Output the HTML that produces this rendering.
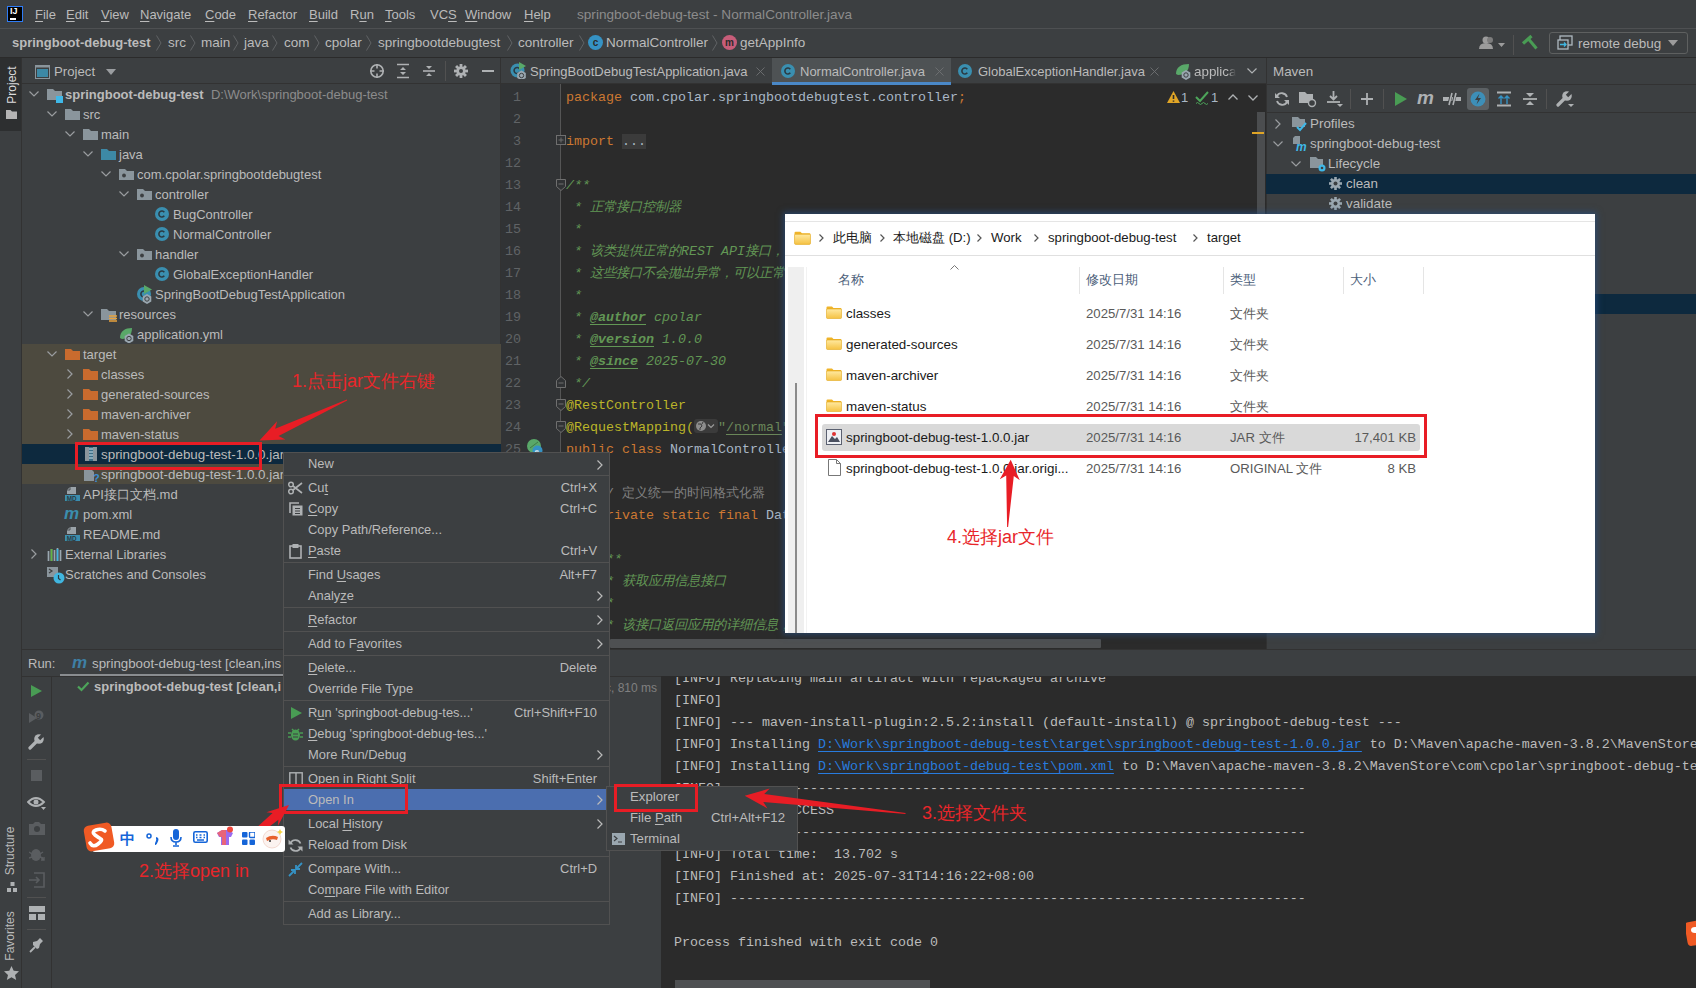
<!DOCTYPE html>
<html><head><meta charset="utf-8">
<style>
*{margin:0;padding:0;box-sizing:border-box}
html,body{width:1696px;height:988px;overflow:hidden;background:#3c3f41;font-family:"Liberation Sans",sans-serif;font-size:13px;color:#bbbbbb}
.a{position:absolute}
.t{position:absolute;white-space:nowrap;line-height:16px}
.m{font-family:"Liberation Mono",monospace}
.u{text-decoration:underline;text-underline-offset:2px;text-decoration-thickness:1px}
.chev{position:absolute;width:7px;height:7px;border-right:1.3px solid #9a9da0;border-bottom:1.3px solid #9a9da0}
.cd{transform:rotate(45deg)}
.cr{transform:rotate(-45deg)}
.fold{position:absolute;width:14px;height:11px}
.cic{position:absolute;width:15px;height:15px;border-radius:50%;background:#3592c4;color:#2b2b2b;font-size:10px;line-height:15px;text-align:center;font-weight:bold}
.mtx{position:absolute;white-space:nowrap;line-height:16px;color:#bbbbbb}
.sc{position:absolute;white-space:nowrap;line-height:16px;color:#bbbbbb;text-align:right}
.sep{position:absolute;height:1px;background:#515151}
.code{position:absolute;white-space:pre;font-family:"Liberation Mono",monospace;font-size:13.33px;line-height:22px;color:#a9b7c6}
.ln{position:absolute;white-space:pre;font-family:"Liberation Mono",monospace;font-size:13.33px;line-height:22px;color:#606366;text-align:right;width:30px}
.k{color:#cc7832}.cm{color:#629755;font-style:italic}.an{color:#bbb529}.lc{color:#808080}
</style></head><body>

<!-- ================= title bar ================= -->
<div class="a" style="left:0;top:0;width:1696px;height:29px;background:#3c3f41;border-bottom:1px solid #4e5052"></div>
<div class="a" style="left:7px;top:6px;width:16px;height:16px;background:#000;border:1.5px solid #2f7cf6"></div>
<div class="t" style="left:10px;top:7px;font-size:9px;font-weight:bold;color:#fff;line-height:9px">IJ</div>
<div class="a" style="left:10px;top:18px;width:6px;height:1.5px;background:#fff"></div>
<div class="t" style="left:35px;top:7px"><span class="u">F</span>ile</div>
<div class="t" style="left:66px;top:7px"><span class="u">E</span>dit</div>
<div class="t" style="left:101px;top:7px"><span class="u">V</span>iew</div>
<div class="t" style="left:140px;top:7px"><span class="u">N</span>avigate</div>
<div class="t" style="left:205px;top:7px"><span class="u">C</span>ode</div>
<div class="t" style="left:248px;top:7px"><span class="u">R</span>efactor</div>
<div class="t" style="left:309px;top:7px"><span class="u">B</span>uild</div>
<div class="t" style="left:350px;top:7px">R<span class="u">u</span>n</div>
<div class="t" style="left:385px;top:7px"><span class="u">T</span>ools</div>
<div class="t" style="left:430px;top:7px">VC<span class="u">S</span></div>
<div class="t" style="left:465px;top:7px"><span class="u">W</span>indow</div>
<div class="t" style="left:524px;top:7px"><span class="u">H</span>elp</div>
<div class="t" style="left:577px;top:7px;color:#8c8c8c;font-size:13.6px">springboot-debug-test - NormalController.java</div>

<!-- ================= nav bar ================= -->
<div class="a" style="left:0;top:29px;width:1696px;height:29px;background:#3c3f41;border-bottom:1px solid #323232"></div>
<div class="t" style="left:12px;top:35px;font-weight:bold;color:#bbbbbb">springboot-debug-test</div>
<svg class="a" style="left:156px;top:35px" width="6" height="16"><path d="M0.5 0.5L5 8 0.5 15.5" stroke="#606365" stroke-width="1" fill="none"/></svg><svg class="a" style="left:190px;top:35px" width="6" height="16"><path d="M0.5 0.5L5 8 0.5 15.5" stroke="#606365" stroke-width="1" fill="none"/></svg><svg class="a" style="left:233px;top:35px" width="6" height="16"><path d="M0.5 0.5L5 8 0.5 15.5" stroke="#606365" stroke-width="1" fill="none"/></svg><svg class="a" style="left:272px;top:35px" width="6" height="16"><path d="M0.5 0.5L5 8 0.5 15.5" stroke="#606365" stroke-width="1" fill="none"/></svg><svg class="a" style="left:314px;top:35px" width="6" height="16"><path d="M0.5 0.5L5 8 0.5 15.5" stroke="#606365" stroke-width="1" fill="none"/></svg><svg class="a" style="left:366px;top:35px" width="6" height="16"><path d="M0.5 0.5L5 8 0.5 15.5" stroke="#606365" stroke-width="1" fill="none"/></svg><svg class="a" style="left:507px;top:35px" width="6" height="16"><path d="M0.5 0.5L5 8 0.5 15.5" stroke="#606365" stroke-width="1" fill="none"/></svg><svg class="a" style="left:579px;top:35px" width="6" height="16"><path d="M0.5 0.5L5 8 0.5 15.5" stroke="#606365" stroke-width="1" fill="none"/></svg><svg class="a" style="left:712px;top:35px" width="6" height="16"><path d="M0.5 0.5L5 8 0.5 15.5" stroke="#606365" stroke-width="1" fill="none"/></svg>
<div class="t" style="left:168px;top:35px;font-size:13.5px">src</div>
<div class="t" style="left:201px;top:35px;font-size:13.5px">main</div>
<div class="t" style="left:244px;top:35px;font-size:13.5px">java</div>
<div class="t" style="left:284px;top:35px;font-size:13.5px">com</div>
<div class="t" style="left:325px;top:35px;font-size:13.5px">cpolar</div>
<div class="t" style="left:378px;top:35px;font-size:13.5px">springbootdebugtest</div>
<div class="t" style="left:518px;top:35px;font-size:13.5px">controller</div>
<div class="cic" style="left:588px;top:35px">c</div>
<div class="t" style="left:606px;top:35px;font-size:13.5px">NormalController</div>
<div class="cic" style="left:722px;top:35px;background:#c75d79">m</div>
<div class="t" style="left:740px;top:35px;font-size:13.5px">getAppInfo</div>
<!-- right side nav -->
<svg class="a" style="left:1478px;top:35px" width="30" height="16"><circle cx="8" cy="5" r="3.5" fill="#9c9c9c"/><path d="M1 14 q0-6 7-6 q7 0 7 6z" fill="#9c9c9c"/><circle cx="12" cy="5" r="3" fill="#7d7d7d"/><path d="M20 8 h7 l-3.5 4z" fill="#9c9c9c"/></svg>
<div class="a" style="left:1513px;top:35px;width:1px;height:20px;background:#515151"></div>
<svg class="a" style="left:1520px;top:34px" width="20" height="18"><path d="M3 9.5L11.5 2" stroke="#499c54" stroke-width="3.2"/><path d="M8.5 5L16.5 14.5" stroke="#499c54" stroke-width="3"/></svg>
<div class="a" style="left:1549px;top:32px;width:139px;height:22px;border:1px solid #5e6060;border-radius:3px"></div>
<svg class="a" style="left:1557px;top:35px" width="16" height="16"><rect x="3" y="1" width="12" height="9" fill="none" stroke="#aeb9c0" stroke-width="1.3"/><rect x="1" y="5" width="10" height="9" fill="#3c3f41" stroke="#aeb9c0" stroke-width="1.3"/><path d="M3 9.5h6M7 7.5l2 2-2 2" stroke="#40b6e0" stroke-width="1.3" fill="none"/></svg>
<div class="t" style="left:1578px;top:36px;font-size:13.5px">remote debug</div>
<div class="a" style="left:1668px;top:40px;width:0;height:0;border-left:5px solid transparent;border-right:5px solid transparent;border-top:6px solid #9c9c9c"></div>

<!-- ================= left stripe ================= -->
<div class="a" style="left:0;top:57px;width:22px;height:931px;background:#3c3f41;border-right:1px solid #323232"></div>
<div class="a" style="left:0;top:57px;width:21px;height:74px;background:#2d2f30"></div>
<div class="t" style="left:-8px;top:77px;transform:rotate(-90deg);color:#dcdcdc;font-size:12px;width:40px;text-align:center">Project</div><svg class="a" style="left:6px;top:110px" width="11" height="9"><path d="M0 0h4.5l1.5 1.5h5v7.5h-11z" fill="#b4b4b4"/></svg>

<!-- ================= project panel ================= -->
<div class="a" style="left:22px;top:57px;width:479px;height:593px;background:#3c3f41;border-right:1px solid #323232"></div>
<div class="a" style="left:22px;top:83px;width:479px;height:1px;background:#323232"></div>

<!-- ================= editor ================= -->
<div class="a" style="left:501px;top:57px;width:765px;height:27px;background:#3c3f41;border-bottom:1px solid #323232"></div>
<div class="a" style="left:501px;top:84px;width:765px;height:566px;background:#2b2b2b"></div>

<!-- ================= maven ================= -->
<div class="a" style="left:1266px;top:57px;width:430px;height:593px;background:#3c3f41;border-left:1px solid #323232"></div>

<!-- ================= bottom ================= -->
<div class="a" style="left:22px;top:649px;width:1674px;height:339px;background:#3c3f41;border-top:1px solid #323232"></div>
<div class="a" style="left:661px;top:676px;width:1035px;height:312px;background:#2b2b2b"></div>
<div class="a" style="left:22px;top:344px;width:479px;height:140px;background:#4d4a3f"></div>
<div class="a" style="left:22px;top:444px;width:479px;height:20px;background:#0d293e"></div>
<div class="a" style="left:22px;top:84px;width:479px;height:560px;overflow:hidden">
<svg class="a" style="left:7px;top:7px" width="10" height="6"><path d="M0.5 0.5 L5 5 L9.5 0.5" stroke="#9a9da0" stroke-width="1.2" fill="none"/></svg>
<svg class="a" style="left:25px;top:5px" width="15" height="11"><path d="M0 0h6l2 2h7v9h-15z" fill="#8a959c"/></svg>
<div class="a" style="left:34px;top:12px;width:7px;height:7px;background:#3fb8e8"></div>
<div class="t" style="left:43px;top:3px;font-size:13px;color:#bbbbbb"><b style="color:#bbbbbb">springboot-debug-test</b>&nbsp; <span style="color:#8c8c8c">D:\Work\springboot-debug-test</span></div>
<svg class="a" style="left:25px;top:27px" width="10" height="6"><path d="M0.5 0.5 L5 5 L9.5 0.5" stroke="#9a9da0" stroke-width="1.2" fill="none"/></svg>
<svg class="a" style="left:43px;top:25px" width="15" height="11"><path d="M0 0h6l2 2h7v9h-15z" fill="#8a959c"/></svg>
<div class="t" style="left:61px;top:23px;font-size:13px;color:#bbbbbb">src</div>
<svg class="a" style="left:43px;top:47px" width="10" height="6"><path d="M0.5 0.5 L5 5 L9.5 0.5" stroke="#9a9da0" stroke-width="1.2" fill="none"/></svg>
<svg class="a" style="left:61px;top:45px" width="15" height="11"><path d="M0 0h6l2 2h7v9h-15z" fill="#8a959c"/></svg>
<div class="t" style="left:79px;top:43px;font-size:13px;color:#bbbbbb">main</div>
<svg class="a" style="left:61px;top:67px" width="10" height="6"><path d="M0.5 0.5 L5 5 L9.5 0.5" stroke="#9a9da0" stroke-width="1.2" fill="none"/></svg>
<svg class="a" style="left:79px;top:65px" width="15" height="11"><path d="M0 0h6l2 2h7v9h-15z" fill="#3d89a6"/></svg>
<div class="t" style="left:97px;top:63px;font-size:13px;color:#bbbbbb">java</div>
<svg class="a" style="left:79px;top:87px" width="10" height="6"><path d="M0.5 0.5 L5 5 L9.5 0.5" stroke="#9a9da0" stroke-width="1.2" fill="none"/></svg>
<svg class="a" style="left:97px;top:85px" width="15" height="11"><path d="M0 0h6l2 2h7v9h-15z" fill="#8a959c"/><circle cx="5" cy="6.5" r="1.9" fill="#3c3f41"/></svg>
<div class="t" style="left:115px;top:83px;font-size:13px;color:#bbbbbb">com.cpolar.springbootdebugtest</div>
<svg class="a" style="left:97px;top:107px" width="10" height="6"><path d="M0.5 0.5 L5 5 L9.5 0.5" stroke="#9a9da0" stroke-width="1.2" fill="none"/></svg>
<svg class="a" style="left:115px;top:105px" width="15" height="11"><path d="M0 0h6l2 2h7v9h-15z" fill="#8a959c"/><circle cx="5" cy="6.5" r="1.9" fill="#3c3f41"/></svg>
<div class="t" style="left:133px;top:103px;font-size:13px;color:#bbbbbb">controller</div>
<svg class="a" style="left:133px;top:123px" width="14" height="14"><circle cx="7" cy="7" r="7" fill="#3a8fb0"/><path d="M9.3 5.2 A3 3 0 1 0 9.3 8.8" stroke="#2b3a42" stroke-width="1.6" fill="none"/></svg>
<div class="t" style="left:151px;top:123px;font-size:13px;color:#bbbbbb">BugController</div>
<svg class="a" style="left:133px;top:143px" width="14" height="14"><circle cx="7" cy="7" r="7" fill="#3a8fb0"/><path d="M9.3 5.2 A3 3 0 1 0 9.3 8.8" stroke="#2b3a42" stroke-width="1.6" fill="none"/></svg>
<div class="t" style="left:151px;top:143px;font-size:13px;color:#bbbbbb">NormalController</div>
<svg class="a" style="left:97px;top:167px" width="10" height="6"><path d="M0.5 0.5 L5 5 L9.5 0.5" stroke="#9a9da0" stroke-width="1.2" fill="none"/></svg>
<svg class="a" style="left:115px;top:165px" width="15" height="11"><path d="M0 0h6l2 2h7v9h-15z" fill="#8a959c"/><circle cx="5" cy="6.5" r="1.9" fill="#3c3f41"/></svg>
<div class="t" style="left:133px;top:163px;font-size:13px;color:#bbbbbb">handler</div>
<svg class="a" style="left:133px;top:183px" width="14" height="14"><circle cx="7" cy="7" r="7" fill="#3a8fb0"/><path d="M9.3 5.2 A3 3 0 1 0 9.3 8.8" stroke="#2b3a42" stroke-width="1.6" fill="none"/></svg>
<div class="t" style="left:151px;top:183px;font-size:13px;color:#bbbbbb">GlobalExceptionHandler</div>
<svg class="a" style="left:115px;top:203px" width="14" height="14"><circle cx="7" cy="7" r="7" fill="#3a8fb0"/><path d="M9.3 5.2 A3 3 0 1 0 9.3 8.8" stroke="#2b3a42" stroke-width="1.6" fill="none"/></svg>
<svg class="a" style="left:122px;top:201px" width="8" height="9"><path d="M0 0l8 4.5-8 4.5z" fill="#59a869"/></svg>
<svg class="a" style="left:120px;top:210px" width="10" height="10"><path d="M5 0l4.3 2.5v5L5 10 0.7 7.5v-5z" fill="#9aa7b0"/><circle cx="5" cy="5" r="2.2" fill="none" stroke="#3c3f41" stroke-width="1"/></svg>
<div class="t" style="left:133px;top:203px;font-size:13px;color:#bbbbbb">SpringBootDebugTestApplication</div>
<svg class="a" style="left:61px;top:227px" width="10" height="6"><path d="M0.5 0.5 L5 5 L9.5 0.5" stroke="#9a9da0" stroke-width="1.2" fill="none"/></svg>
<svg class="a" style="left:79px;top:225px" width="15" height="11"><path d="M0 0h6l2 2h7v9h-15z" fill="#8a959c"/></svg>
<svg class="a" style="left:87px;top:231px" width="8" height="8"><path d="M0 1h8M0 3.5h8M0 6h8" stroke="#e8a33d" stroke-width="1.4"/></svg>
<div class="t" style="left:97px;top:223px;font-size:13px;color:#bbbbbb">resources</div>
<svg class="a" style="left:97px;top:243px" width="16" height="16"><path d="M1 11 C1 4 6 1 13 1 C13 8 9 12 3 12z" fill="#59a869"/><path d="M10 6.5l4.3 2.5v5L10 16.5 5.7 14v-5z" fill="#9aa7b0"/><circle cx="10" cy="11.5" r="2.2" fill="none" stroke="#3c3f41" stroke-width="1"/></svg>
<div class="t" style="left:115px;top:243px;font-size:13px;color:#bbbbbb">application.yml</div>
<svg class="a" style="left:25px;top:267px" width="10" height="6"><path d="M0.5 0.5 L5 5 L9.5 0.5" stroke="#9a9da0" stroke-width="1.2" fill="none"/></svg>
<svg class="a" style="left:43px;top:265px" width="15" height="11"><path d="M0 0h6l2 2h7v9h-15z" fill="#c96b2e"/></svg>
<div class="t" style="left:61px;top:263px;font-size:13px;color:#bbbbbb">target</div>
<svg class="a" style="left:45px;top:285px" width="6" height="10"><path d="M0.5 0.5 L5 5 L0.5 9.5" stroke="#9a9da0" stroke-width="1.2" fill="none"/></svg>
<svg class="a" style="left:61px;top:285px" width="15" height="11"><path d="M0 0h6l2 2h7v9h-15z" fill="#c96b2e"/></svg>
<div class="t" style="left:79px;top:283px;font-size:13px;color:#bbbbbb">classes</div>
<svg class="a" style="left:45px;top:305px" width="6" height="10"><path d="M0.5 0.5 L5 5 L0.5 9.5" stroke="#9a9da0" stroke-width="1.2" fill="none"/></svg>
<svg class="a" style="left:61px;top:305px" width="15" height="11"><path d="M0 0h6l2 2h7v9h-15z" fill="#c96b2e"/></svg>
<div class="t" style="left:79px;top:303px;font-size:13px;color:#bbbbbb">generated-sources</div>
<svg class="a" style="left:45px;top:325px" width="6" height="10"><path d="M0.5 0.5 L5 5 L0.5 9.5" stroke="#9a9da0" stroke-width="1.2" fill="none"/></svg>
<svg class="a" style="left:61px;top:325px" width="15" height="11"><path d="M0 0h6l2 2h7v9h-15z" fill="#c96b2e"/></svg>
<div class="t" style="left:79px;top:323px;font-size:13px;color:#bbbbbb">maven-archiver</div>
<svg class="a" style="left:45px;top:345px" width="6" height="10"><path d="M0.5 0.5 L5 5 L0.5 9.5" stroke="#9a9da0" stroke-width="1.2" fill="none"/></svg>
<svg class="a" style="left:61px;top:345px" width="15" height="11"><path d="M0 0h6l2 2h7v9h-15z" fill="#c96b2e"/></svg>
<div class="t" style="left:79px;top:343px;font-size:13px;color:#bbbbbb">maven-status</div>
<svg class="a" style="left:63px;top:363px" width="12" height="14"><rect x="0" y="0" width="12" height="14" fill="#8a959c"/><rect x="4" y="0" width="4" height="14" fill="#3d6e86"/><path d="M4 2h4M4 5h4M4 8h4M4 11h4" stroke="#cfe3ee" stroke-width="1"/></svg>
<div class="t" style="left:79px;top:363px;font-size:13.4px;color:#bbbbbb">springboot-debug-test-1.0.0.jar</div>
<svg class="a" style="left:62px;top:383px" width="16" height="16"><path d="M0 2h7l3 3v9h-10z" fill="#8a959c"/><text x="9" y="15" font-size="11" font-weight="bold" fill="#3d8fd4" font-family="Liberation Sans">?</text></svg>
<div class="t" style="left:79px;top:383px;font-size:13.4px;color:#bbbbbb">springboot-debug-test-1.0.0.jar.original</div>
<svg class="a" style="left:43px;top:402px" width="16" height="16"><path d="M5 1h6v7h-9v-4z" fill="#9aa3a9"/><path d="M5 1v3h-3" fill="none" stroke="#3c3f41" stroke-width="0.8"/><rect x="0" y="9" width="15" height="6" fill="#3b8eae"/><text x="1.8" y="14.6" font-size="6.3" font-weight="bold" fill="#2b3b42" font-family="Liberation Sans">MD</text></svg>
<div class="t" style="left:61px;top:403px;font-size:13px;color:#bbbbbb">API接口文档.md</div>
<div class="t" style="left:42px;top:420px;font-size:17px;line-height:20px;font-style:italic;font-weight:bold;color:#3b8eae">m</div>
<div class="t" style="left:61px;top:423px;font-size:13px;color:#bbbbbb">pom.xml</div>
<svg class="a" style="left:43px;top:442px" width="16" height="16"><path d="M5 1h6v7h-9v-4z" fill="#9aa3a9"/><path d="M5 1v3h-3" fill="none" stroke="#3c3f41" stroke-width="0.8"/><rect x="0" y="9" width="15" height="6" fill="#3b8eae"/><text x="1.8" y="14.6" font-size="6.3" font-weight="bold" fill="#2b3b42" font-family="Liberation Sans">MD</text></svg>
<div class="t" style="left:61px;top:443px;font-size:13px;color:#bbbbbb">README.md</div>
<svg class="a" style="left:9px;top:465px" width="6" height="10"><path d="M0.5 0.5 L5 5 L0.5 9.5" stroke="#9a9da0" stroke-width="1.2" fill="none"/></svg>
<svg class="a" style="left:25px;top:464px" width="16" height="13"><path d="M1.5 3v10M4.5 1v12M7.5 2v11M10.5 0v13M13.5 2v11" stroke="#9aa7b0" stroke-width="1.7"/><path d="M4.5 1v12" stroke="#62b543" stroke-width="1.7"/><path d="M10.5 1v12" stroke="#40b6e0" stroke-width="1.7"/></svg>
<div class="t" style="left:43px;top:463px;font-size:13px;color:#bbbbbb">External Libraries</div>
<svg class="a" style="left:25px;top:482px" width="18" height="18"><rect x="0" y="1" width="11" height="10" fill="#8a959c"/><path d="M2 3l3 2-3 2" stroke="#3c3f41" stroke-width="1.2" fill="none"/><circle cx="12" cy="12" r="5.5" fill="#40b6e0"/><path d="M11.5 9v3.5l2 1.5" stroke="#2b3b42" stroke-width="1.2" fill="none"/></svg>
<div class="t" style="left:43px;top:483px;font-size:13px;color:#bbbbbb">Scratches and Consoles</div>
</div>
<svg class="a" style="left:35px;top:65px" width="15" height="14"><rect x="0.5" y="0.5" width="14" height="13" fill="none" stroke="#8a959c"/><rect x="0.5" y="0.5" width="14" height="2" fill="#8a959c"/><rect x="2" y="4" width="11" height="8" fill="#3d89a6"/></svg>
<div class="t" style="left:54px;top:64px;font-size:13.2px">Project</div>
<div class="a" style="left:106px;top:69px;width:0;height:0;border-left:5px solid transparent;border-right:5px solid transparent;border-top:6px solid #9a9da0"></div>
<svg class="a" style="left:369px;top:63px" width="16" height="16"><circle cx="8" cy="8" r="6.2" fill="none" stroke="#aeb1b3" stroke-width="1.6"/><path d="M8 1v4.5M8 10.5v4.5M1 8h4.5M10.5 8h4.5" stroke="#aeb1b3" stroke-width="1.6"/></svg>
<svg class="a" style="left:396px;top:63px" width="14" height="16"><path d="M1 1.5h12M1 14.5h12" stroke="#aeb1b3" stroke-width="1.6"/><path d="M7 4l3 3h-6zM7 12l3-3h-6z" fill="#aeb1b3"/></svg>
<svg class="a" style="left:422px;top:63px" width="14" height="16"><path d="M1 8h12" stroke="#aeb1b3" stroke-width="1.6"/><path d="M7 6l3-3h-6zM7 10l3 3h-6z" fill="#aeb1b3"/></svg>
<div class="a" style="left:445px;top:61px;width:1px;height:20px;background:#515151"></div>
<svg class="a" style="left:454px;top:64px" width="14" height="14"><g fill="#aeb1b3"><circle cx="7" cy="7" r="4.6"/><rect x="5.6" y="0" width="2.8" height="14"/><rect x="0" y="5.6" width="14" height="2.8"/><rect x="5.6" y="0" width="2.8" height="14" transform="rotate(45 7 7)"/><rect x="5.6" y="0" width="2.8" height="14" transform="rotate(-45 7 7)"/></g><circle cx="7" cy="7" r="2" fill="#3c3f41"/></svg>
<div class="a" style="left:482px;top:70px;width:12px;height:2px;background:#aeb1b3"></div>
<div class="a" style="left:0;top:57px;width:1696px;height:1px;background:#2b2b2b"></div>
<svg class="a" style="left:510px;top:62px" width="17" height="17"><circle cx="7.5" cy="8.5" r="7" fill="#3a8fb0"/><path d="M9.5 6.7 A3 3 0 1 0 9.5 10.3" stroke="#2b3a42" stroke-width="1.6" fill="none"/><path d="M9 0l7 4-7 4z" fill="#59a869"/><path d="M11.5 8.5l4.3 2.5v5l-4.3 2.5-4.3-2.5v-5z" fill="#9aa7b0"/><circle cx="11.5" cy="13.5" r="2.2" fill="none" stroke="#3c3f41" stroke-width="1"/></svg>
<div class="t" style="left:530px;top:64px;font-size:13px">SpringBootDebugTestApplication.java</div>
<svg class="a" style="left:756px;top:67px" width="9" height="9"><path d="M0.5 0.5l8 8M8.5 0.5l-8 8" stroke="#6f7274" stroke-width="0.9"/></svg>
<div class="a" style="left:772px;top:58px;width:179px;height:24px;background:#4e5254"></div>
<div class="a" style="left:772px;top:82px;width:179px;height:3px;background:#4a88c7"></div>
<svg class="a" style="left:781px;top:64px" width="14" height="14"><circle cx="7" cy="7" r="7" fill="#3a8fb0"/><path d="M9.3 5.2 A3 3 0 1 0 9.3 8.8" stroke="#2b3a42" stroke-width="1.6" fill="none"/></svg>
<div class="t" style="left:800px;top:64px;font-size:13px">NormalController.java</div>
<svg class="a" style="left:935px;top:67px" width="9" height="9"><path d="M0.5 0.5l8 8M8.5 0.5l-8 8" stroke="#6f7274" stroke-width="0.9"/></svg>
<svg class="a" style="left:958px;top:64px" width="14" height="14"><circle cx="7" cy="7" r="7" fill="#3a8fb0"/><path d="M9.3 5.2 A3 3 0 1 0 9.3 8.8" stroke="#2b3a42" stroke-width="1.6" fill="none"/></svg>
<div class="t" style="left:978px;top:64px;font-size:13px">GlobalExceptionHandler.java</div>
<svg class="a" style="left:1150px;top:67px" width="9" height="9"><path d="M0.5 0.5l8 8M8.5 0.5l-8 8" stroke="#6f7274" stroke-width="0.9"/></svg>
<svg class="a" style="left:1175px;top:63px" width="18" height="17"><path d="M1 11 C1 4 6 1 14 1 C14 8 10 12 3 12z" fill="#59a869"/><path d="M11 7l4.3 2.5v5L11 17 6.7 14.5v-5z" fill="#9aa7b0"/><circle cx="11" cy="12" r="2.2" fill="none" stroke="#3c3f41" stroke-width="1"/></svg>
<div class="t" style="left:1194px;top:64px;font-size:13.4px;-webkit-mask-image:linear-gradient(90deg,#000 80%,transparent)">applica</div>
<svg class="a" style="left:1247px;top:68px" width="10" height="6"><path d="M0.5 0.5 L5 5 L9.5 0.5" stroke="#aeb1b3" stroke-width="1.2" fill="none"/></svg>
<div class="a" style="left:501px;top:84px;width:60px;height:551px;background:#313335"></div>
<div class="a" style="left:560px;top:84px;width:1px;height:551px;background:#555555"></div>
<div class="a" style="left:501px;top:84px;width:764px;height:551px;overflow:hidden">
<div class="ln" style="left:-11px;top:3px;width:31px">1</div>
<div class="code" style="left:65px;top:3px"><span class="k">package</span> com.cpolar.springbootdebugtest.controller<span class="k">;</span></div>
<div class="ln" style="left:-11px;top:25px;width:31px">2</div>
<div class="code" style="left:65px;top:25px"></div>
<div class="ln" style="left:-11px;top:47px;width:31px">3</div>
<div class="code" style="left:65px;top:47px"><span class="k">import</span> <span style="background:#3b3b3b;color:#a9b7c6">...</span></div>
<div class="ln" style="left:-11px;top:69px;width:31px">12</div>
<div class="code" style="left:65px;top:69px"></div>
<div class="ln" style="left:-11px;top:91px;width:31px">13</div>
<div class="code" style="left:65px;top:91px"><span class="cm">/**</span></div>
<div class="ln" style="left:-11px;top:113px;width:31px">14</div>
<div class="code" style="left:65px;top:113px"><span class="cm"> * 正常接口控制器</span></div>
<div class="ln" style="left:-11px;top:135px;width:31px">15</div>
<div class="code" style="left:65px;top:135px"><span class="cm"> *</span></div>
<div class="ln" style="left:-11px;top:157px;width:31px">16</div>
<div class="code" style="left:65px;top:157px"><span class="cm"> * 该类提供正常的REST API接口，</span></div>
<div class="ln" style="left:-11px;top:179px;width:31px">17</div>
<div class="code" style="left:65px;top:179px"><span class="cm"> * 这些接口不会抛出异常，可以正常使用</span></div>
<div class="ln" style="left:-11px;top:201px;width:31px">18</div>
<div class="code" style="left:65px;top:201px"><span class="cm"> *</span></div>
<div class="ln" style="left:-11px;top:223px;width:31px">19</div>
<div class="code" style="left:65px;top:223px"><span class="cm"> * <b style="text-decoration:underline;text-underline-offset:3px">@author</b> cpolar</span></div>
<div class="ln" style="left:-11px;top:245px;width:31px">20</div>
<div class="code" style="left:65px;top:245px"><span class="cm"> * <b style="text-decoration:underline;text-underline-offset:3px">@version</b> 1.0.0</span></div>
<div class="ln" style="left:-11px;top:267px;width:31px">21</div>
<div class="code" style="left:65px;top:267px"><span class="cm"> * <b style="text-decoration:underline;text-underline-offset:3px">@since</b> 2025-07-30</span></div>
<div class="ln" style="left:-11px;top:289px;width:31px">22</div>
<div class="code" style="left:65px;top:289px"><span class="cm"> */</span></div>
<div class="ln" style="left:-11px;top:311px;width:31px">23</div>
<div class="code" style="left:65px;top:311px"><span class="an">@RestController</span></div>
<div class="ln" style="left:-11px;top:333px;width:31px">24</div>
<div class="code" style="left:65px;top:333px"><span class="an">@RequestMapping(</span><span style="display:inline-block;width:24px"></span><span style="color:#6a8759">"<span style="text-decoration:underline;text-underline-offset:3px">/normal</span>"</span><span class="an">)</span></div>
<div class="ln" style="left:-11px;top:355px;width:31px">25</div>
<div class="code" style="left:65px;top:355px"><span class="k">public class</span> NormalController {</div>
<div class="ln" style="left:-11px;top:377px;width:31px">26</div>
<div class="code" style="left:65px;top:377px"></div>
<div class="ln" style="left:-11px;top:399px;width:31px">27</div>
<div class="code" style="left:65px;top:399px">    <span class="lc">// 定义统一的时间格式化器</span></div>
<div class="ln" style="left:-11px;top:421px;width:31px">28</div>
<div class="code" style="left:65px;top:421px">    <span class="k">private static final</span> DateTimeFormatter <span style="color:#9876aa;font-style:italic">FORMATTER</span></div>
<div class="ln" style="left:-11px;top:443px;width:31px">29</div>
<div class="code" style="left:65px;top:443px"></div>
<div class="ln" style="left:-11px;top:465px;width:31px">30</div>
<div class="code" style="left:65px;top:465px">    <span class="cm">/**</span></div>
<div class="ln" style="left:-11px;top:487px;width:31px">31</div>
<div class="code" style="left:65px;top:487px"><span class="cm">     * 获取应用信息接口</span></div>
<div class="ln" style="left:-11px;top:509px;width:31px">32</div>
<div class="code" style="left:65px;top:509px"><span class="cm">     *</span></div>
<div class="ln" style="left:-11px;top:531px;width:31px">33</div>
<div class="code" style="left:65px;top:531px"><span class="cm">     * 该接口返回应用的详细信息，</span></div>
<div class="ln" style="left:-11px;top:553px;width:31px">34</div>
<div class="code" style="left:65px;top:553px"><span class="cm">     *</span></div>
</div>
<svg class="a" style="left:556px;top:135px" width="11" height="13"><rect x="0.5" y="0.5" width="9" height="9" fill="#313335" stroke="#6f6f6f"/><path d="M2.5 5h5" stroke="#6f6f6f"/><path d="M5 2.5v5" stroke="#6f6f6f"/></svg>
<svg class="a" style="left:556px;top:179px" width="11" height="13"><path d="M0.5 0.5h9v7l-4.5 4-4.5-4z" fill="#313335" stroke="#6f6f6f"/><path d="M2.5 5h5" stroke="#6f6f6f"/></svg>
<svg class="a" style="left:556px;top:375px" width="11" height="13"><path d="M0.5 12.5h9v-7l-4.5-4-4.5 4z" fill="#313335" stroke="#6f6f6f"/><path d="M2.5 8h5" stroke="#6f6f6f"/></svg>
<svg class="a" style="left:556px;top:399px" width="11" height="13"><path d="M0.5 0.5h9v7l-4.5 4-4.5-4z" fill="#313335" stroke="#6f6f6f"/><path d="M2.5 5h5" stroke="#6f6f6f"/></svg>
<svg class="a" style="left:556px;top:421px" width="11" height="13"><path d="M0.5 0.5h9v7l-4.5 4-4.5-4z" fill="#313335" stroke="#6f6f6f"/><path d="M2.5 5h5" stroke="#6f6f6f"/></svg>
<svg class="a" style="left:694px;top:419px" width="24" height="14"><rect x="0" y="0" width="24" height="14" rx="3" fill="#3b3b3b"/><circle cx="7" cy="7" r="5" fill="#8d8d8d"/><path d="M4 5h3l1 2-2 2v2M9 3l-1 2" stroke="#3b3b3b" stroke-width="1" fill="none"/><path d="M14 5.5l3 3 3-3" stroke="#9a9a9a" stroke-width="1.2" fill="none"/></svg>
<svg class="a" style="left:527px;top:439px" width="16" height="17"><circle cx="7" cy="7" r="7" fill="#59a869"/><path d="M3 9 L11 3" stroke="#3f7a4a" stroke-width="1"/><circle cx="10.5" cy="11.5" r="5" fill="#3592c4"/><text x="7.5" y="14.5" font-size="8" fill="#dfe8f0" font-family="Liberation Sans" font-weight="bold">e</text></svg>
<svg class="a" style="left:1166px;top:90px" width="15" height="14"><path d="M7.5 1L14 13H1z" fill="#e0a526"/><path d="M7.5 5v4M7.5 10.5v1.2" stroke="#2b2b2b" stroke-width="1.6"/></svg>
<div class="t" style="left:1181px;top:90px;color:#a9b7c6;font-size:13px">1</div>
<svg class="a" style="left:1195px;top:90px" width="14" height="15"><path d="M1 7l4 4 8-9" stroke="#4da55a" stroke-width="2" fill="none"/><path d="M1 13.5q1.5-2 3 0t3 0 3 0 3 0" stroke="#4da55a" stroke-width="1" fill="none"/></svg>
<div class="t" style="left:1211px;top:90px;color:#a9b7c6;font-size:13px">1</div>
<svg class="a" style="left:1228px;top:94px" width="10" height="6"><path d="M0.5 5.5L5 1l4.5 4.5" stroke="#aeb1b3" stroke-width="1.3" fill="none"/></svg>
<svg class="a" style="left:1248px;top:95px" width="10" height="6"><path d="M0.5 0.5L5 5l4.5-4.5" stroke="#aeb1b3" stroke-width="1.3" fill="none"/></svg>
<div class="a" style="left:1257px;top:112px;width:8px;height:110px;background:#4b4d4f"></div>
<div class="a" style="left:1252px;top:132px;width:12px;height:2px;background:#e0a526"></div>
<div class="a" style="left:501px;top:635px;width:765px;height:14px;background:#2b2b2b"></div>
<div class="a" style="left:610px;top:639px;width:491px;height:9px;background:#4e5052;border-radius:1px"></div>
<div class="t" style="left:1273px;top:64px;font-size:13.4px">Maven</div>
<div class="a" style="left:1266px;top:84px;width:430px;height:1px;background:#323232"></div>
<div class="a" style="left:1266px;top:112px;width:430px;height:1px;background:#323232"></div>
<svg class="a" style="left:1274px;top:91px" width="16" height="16"><path d="M13 6A5.5 5.5 0 0 0 3 5M3 10a5.5 5.5 0 0 0 10 1" stroke="#aeb1b3" stroke-width="1.8" fill="none"/><path d="M1 2v5h5zM15 14v-5h-5z" fill="#aeb1b3"/></svg>
<svg class="a" style="left:1299px;top:91px" width="18" height="17"><path d="M0 1h6l2 2h6v9h-14z" fill="#aeb1b3"/><circle cx="13" cy="12" r="3.5" fill="#3c3f41" stroke="#aeb1b3" stroke-width="1.4"/></svg>
<svg class="a" style="left:1326px;top:91px" width="18" height="17"><path d="M7.5 0v8M4 5l3.5 3.5L11 5" stroke="#aeb1b3" stroke-width="1.8" fill="none"/><path d="M1 11h13" stroke="#aeb1b3" stroke-width="1.8"/><path d="M11 13h6l-3 3z" fill="#aeb1b3"/></svg>
<div class="a" style="left:1350px;top:89px;width:1px;height:20px;background:#515151"></div>
<svg class="a" style="left:1360px;top:92px" width="14" height="14"><path d="M7 1v12M1 7h12" stroke="#aeb1b3" stroke-width="1.8"/></svg>
<div class="a" style="left:1383px;top:89px;width:1px;height:20px;background:#515151"></div>
<svg class="a" style="left:1394px;top:91px" width="14" height="16"><path d="M1 1l12 7-12 7z" fill="#499c54"/></svg>
<div class="t" style="left:1417px;top:88px;font-size:19px;line-height:20px;font-style:italic;font-weight:bold;color:#aeb1b3">m</div>
<svg class="a" style="left:1443px;top:91px" width="18" height="16"><rect x="0" y="6" width="18" height="4" fill="#aeb1b3"/><path d="M5.5 15L9 1M9.5 15L13 1" stroke="#3c3f41" stroke-width="3"/><path d="M6 14l3-12M10 14l3-12" stroke="#aeb1b3" stroke-width="1.6"/></svg>
<div class="a" style="left:1467px;top:88px;width:22px;height:22px;background:#5c6164;border-radius:3px"></div>
<svg class="a" style="left:1470px;top:91px" width="16" height="16"><circle cx="8" cy="8" r="7.5" fill="#3d8fb8"/><path d="M9.5 2.5L5 9h3l-1.5 4.5L11 7H8z" fill="#3c3f41"/></svg>
<svg class="a" style="left:1496px;top:91px" width="16" height="16"><path d="M1 1.5h14M1 14.5h14" stroke="#aeb1b3" stroke-width="1.8"/><path d="M5 13V5M2.5 7.5L5 5l2.5 2.5M11 13V5M8.5 7.5L11 5l2.5 2.5" stroke="#3592c4" stroke-width="1.4" fill="none"/></svg>
<svg class="a" style="left:1522px;top:91px" width="16" height="16"><path d="M1 8h14" stroke="#aeb1b3" stroke-width="1.8"/><path d="M8 6l4-4h-8zM8 10l4 4h-8z" fill="#aeb1b3"/></svg>
<div class="a" style="left:1546px;top:89px;width:1px;height:20px;background:#515151"></div>
<svg class="a" style="left:1556px;top:90px" width="19" height="18"><path d="M2 15L9 8" stroke="#aeb1b3" stroke-width="3.2" stroke-linecap="round"/><circle cx="11" cy="6" r="4.8" fill="#aeb1b3"/><path d="M11 6L16 1" stroke="#3c3f41" stroke-width="3.4"/><path d="M12 14h6l-3 3z" fill="#aeb1b3"/></svg>
<div class="a" style="left:1266px;top:174px;width:430px;height:20px;background:#0d293e"></div>
<div class="a" style="left:1266px;top:294px;width:430px;height:20px;background:#0d293e"></div>
<svg class="a" style="left:1275px;top:119px" width="6" height="10"><path d="M0.5 0.5 L5 5 L0.5 9.5" stroke="#9a9da0" stroke-width="1.2" fill="none"/></svg>
<svg class="a" style="left:1292px;top:117px" width="16" height="15"><path d="M0 0h6l2 2h5v8h-13z" fill="#8a959c"/><path d="M5 10l3 3 6-7" stroke="#3fb8e8" stroke-width="2" fill="none"/></svg>
<div class="t" style="left:1310px;top:116px;font-size:13.4px">Profiles</div>
<svg class="a" style="left:1273px;top:141px" width="10" height="6"><path d="M0.5 0.5 L5 5 L9.5 0.5" stroke="#9a9da0" stroke-width="1.2" fill="none"/></svg>
<svg class="a" style="left:1293px;top:136px" width="16" height="16"><path d="M2 0h5v8h-7v-6z" fill="#8a959c"/><text x="3" y="15" font-size="12" font-style="italic" font-weight="bold" fill="#3fb8e8" font-family="Liberation Sans">m</text></svg>
<div class="t" style="left:1310px;top:136px;font-size:13.4px">springboot-debug-test</div>
<svg class="a" style="left:1291px;top:161px" width="10" height="6"><path d="M0.5 0.5 L5 5 L9.5 0.5" stroke="#9a9da0" stroke-width="1.2" fill="none"/></svg>
<svg class="a" style="left:1310px;top:157px" width="17" height="16"><path d="M0 0h6l2 2h5v9h-13z" fill="#8a959c"/><circle cx="12" cy="11" r="3.5" fill="#3fb8e8"/><circle cx="12" cy="11" r="1.3" fill="#3c3f41"/></svg>
<div class="t" style="left:1328px;top:156px;font-size:13.4px">Lifecycle</div>
<svg class="a" style="left:1329px;top:177px" width="13" height="13"><g fill="#9aa7b0"><circle cx="6.5" cy="6.5" r="4.5"/><rect x="5.2" y="0" width="2.6" height="13"/><rect x="0" y="5.2" width="13" height="2.6"/><rect x="5.2" y="0" width="2.6" height="13" transform="rotate(45 6.5 6.5)"/><rect x="5.2" y="0" width="2.6" height="13" transform="rotate(-45 6.5 6.5)"/></g><circle cx="6.5" cy="6.5" r="2" fill="#3c3f41"/></svg>
<div class="t" style="left:1346px;top:176px;font-size:13.4px">clean</div>
<svg class="a" style="left:1329px;top:197px" width="13" height="13"><g fill="#9aa7b0"><circle cx="6.5" cy="6.5" r="4.5"/><rect x="5.2" y="0" width="2.6" height="13"/><rect x="0" y="5.2" width="13" height="2.6"/><rect x="5.2" y="0" width="2.6" height="13" transform="rotate(45 6.5 6.5)"/><rect x="5.2" y="0" width="2.6" height="13" transform="rotate(-45 6.5 6.5)"/></g><circle cx="6.5" cy="6.5" r="2" fill="#3c3f41"/></svg>
<div class="t" style="left:1346px;top:196px;font-size:13.4px">validate</div>
<div class="t" style="left:28px;top:656px;font-size:13px">Run:</div>
<div class="t" style="left:72px;top:653px;font-size:17px;line-height:20px;font-style:italic;font-weight:bold;color:#3e7fa5;letter-spacing:-1px">m</div>
<div class="t" style="left:92px;top:656px;font-size:13.3px">springboot-debug-test [clean,ins</div>
<div class="a" style="left:60px;top:674px;width:223px;height:3px;background:#8a8d90"></div>
<div class="a" style="left:22px;top:676px;width:639px;height:1px;background:#323232"></div>
<div class="a" style="left:51px;top:677px;width:1px;height:311px;background:#323232"></div>
<svg class="a" style="left:77px;top:681px" width="13" height="11"><path d="M1 5.5l3.5 3.5 7-7.5" stroke="#4da55a" stroke-width="2.2" fill="none"/></svg>
<div class="t" style="left:94px;top:679px;font-weight:bold;font-size:13px">springboot-debug-test [clean,i</div>
<div class="t" style="left:557px;top:680px;color:#808080;font-size:12px;width:100px;text-align:right">c, 810 ms</div>
<svg class="a" style="left:30px;top:684px" width="13" height="14"><path d="M1 1l11 6-11 6z" fill="#499c54"/></svg>
<svg class="a" style="left:28px;top:709px" width="18" height="16"><path d="M1 4l8 5-8 5z" fill="#5a5d60"/><circle cx="11" cy="6" r="4.5" fill="#5a5d60"/><text x="8" y="10" font-size="9" font-weight="bold" fill="#3c3f41" font-family="Liberation Sans">9</text></svg>
<svg class="a" style="left:28px;top:733px" width="17" height="17"><path d="M2 15L9 8" stroke="#aeb1b3" stroke-width="3.2" stroke-linecap="round"/><circle cx="11" cy="6" r="4.8" fill="#aeb1b3"/><path d="M11 6L16 1" stroke="#3c3f41" stroke-width="3.4"/></svg>
<div class="a" style="left:27px;top:759px;width:19px;height:1px;background:#515151"></div>
<div class="a" style="left:31px;top:770px;width:11px;height:11px;background:#5a5d60"></div>
<svg class="a" style="left:27px;top:795px" width="20" height="16"><path d="M1 7q8-8 16 0q-8 8-16 0z" fill="none" stroke="#aeb1b3" stroke-width="1.8"/><circle cx="9" cy="7" r="2.5" fill="#aeb1b3"/><path d="M14 12h5l-2.5 3z" fill="#aeb1b3"/></svg>
<svg class="a" style="left:29px;top:821px" width="16" height="14"><path d="M0 3h4l2-2h4l2 2h4v11h-16z" fill="#5a5d60"/><circle cx="8" cy="8" r="3" fill="#3c3f41"/></svg>
<svg class="a" style="left:29px;top:846px" width="16" height="16"><ellipse cx="7" cy="9" rx="5" ry="6" fill="#5a5d60"/><path d="M0 6l3 2M14 6l-3 2M0 12l3-1M14 12l-3-1" stroke="#5a5d60" stroke-width="1.4"/><path d="M9 9l6 5M12 14h3v-3" stroke="#5a5d60" stroke-width="1.4" fill="none"/></svg>
<svg class="a" style="left:29px;top:872px" width="16" height="16"><path d="M5 1h10v14h-10" stroke="#5a5d60" stroke-width="1.6" fill="none"/><path d="M0 8h10M7 5l3 3-3 3" stroke="#5a5d60" stroke-width="1.6" fill="none"/></svg>
<div class="a" style="left:27px;top:897px;width:19px;height:1px;background:#515151"></div>
<svg class="a" style="left:29px;top:906px" width="16" height="14"><rect x="0" y="0" width="16" height="6" fill="#aeb1b3"/><rect x="0" y="8" width="7" height="6" fill="#aeb1b3"/><rect x="9" y="8" width="7" height="6" fill="#aeb1b3"/></svg>
<div class="a" style="left:27px;top:929px;width:19px;height:1px;background:#515151"></div>
<svg class="a" style="left:29px;top:937px" width="16" height="16"><path d="M1 15l5-5" stroke="#aeb1b3" stroke-width="1.8"/><path d="M4 8l4 4 2-1 1-4 3-3-3-3-3 3-4 1z" fill="#aeb1b3"/></svg>
<div class="t" style="left:-15px;top:843px;transform:rotate(-90deg);color:#bbbbbb;font-size:12px;width:50px;text-align:center">Structure</div>
<svg class="a" style="left:7px;top:882px" width="11" height="11"><rect x="3.5" y="0" width="4" height="4" fill="#aeb1b3"/><rect x="0" y="6" width="4" height="4" fill="#aeb1b3"/><rect x="6" y="6" width="4" height="4" fill="#aeb1b3"/></svg>
<div class="t" style="left:-15px;top:928px;transform:rotate(-90deg);color:#bbbbbb;font-size:12px;width:50px;text-align:center">Favorites</div>
<svg class="a" style="left:4px;top:966px" width="15" height="14"><path d="M7.5 0l2.2 4.8 5.3.5-4 3.6 1.2 5.1-4.7-2.7-4.7 2.7 1.2-5.1-4-3.6 5.3-.5z" fill="#aeb1b3"/></svg>
<style>.lnk{color:#287bde;text-decoration:underline;text-underline-offset:3px}</style>
<div class="a" style="left:661px;top:677px;width:1035px;height:311px;overflow:hidden">
<div class="code" style="left:13px;top:-9px;color:#bbbbbb">[INFO] Replacing main artifact with repackaged archive</div>
<div class="code" style="left:13px;top:13px;color:#bbbbbb">[INFO]</div>
<div class="code" style="left:13px;top:35px;color:#bbbbbb">[INFO] --- maven-install-plugin:2.5.2:install (default-install) @ springboot-debug-test ---</div>
<div class="code" style="left:13px;top:57px;color:#bbbbbb">[INFO] Installing <span class="lnk">D:\Work\springboot-debug-test\target\springboot-debug-test-1.0.0.jar</span> to D:\Maven\apache-maven-3.8.2\MavenStore\com\cpolar\springboot-debug-test\1.0.0\springboot-debug-test-1.0.0.jar</div>
<div class="code" style="left:13px;top:79px;color:#bbbbbb">[INFO] Installing <span class="lnk">D:\Work\springboot-debug-test\pom.xml</span> to D:\Maven\apache-maven-3.8.2\MavenStore\com\cpolar\springboot-debug-test\1.0.0\springboot-debug-test-1.0.0.pom</div>
<div class="code" style="left:13px;top:101px;color:#bbbbbb">[INFO] ------------------------------------------------------------------------</div>
<div class="code" style="left:13px;top:123px;color:#bbbbbb">[INFO] BUILD SUCCESS</div>
<div class="code" style="left:13px;top:145px;color:#bbbbbb">[INFO] ------------------------------------------------------------------------</div>
<div class="code" style="left:13px;top:167px;color:#bbbbbb">[INFO] Total time:  13.702 s</div>
<div class="code" style="left:13px;top:189px;color:#bbbbbb">[INFO] Finished at: 2025-07-31T14:16:22+08:00</div>
<div class="code" style="left:13px;top:211px;color:#bbbbbb">[INFO] ------------------------------------------------------------------------</div>
<div class="code" style="left:13px;top:233px;color:#bbbbbb"></div>
<div class="code" style="left:13px;top:255px;color:#bbbbbb">Process finished with exit code 0</div>
<div class="a" style="left:14px;top:303px;width:255px;height:8px;background:#4e5052"></div>
</div>
<div class="a" style="left:283px;top:452px;width:327px;height:473px;background:#3c3f41;border:1px solid #515151"></div>
<div class="a" style="left:284px;top:789px;width:325px;height:21px;background:#4b6eaf"></div>
<div class="t" style="left:308px;top:456.0px;font-size:12.9px">New</div>
<svg class="a" style="left:597px;top:459.5px" width="6" height="10"><path d="M0.5 0.5L5 5 0.5 9.5" stroke="#bbbbbb" stroke-width="1.2" fill="none"/></svg>
<div class="a" style="left:284px;top:475px;width:325px;height:1px;background:#515151"></div>
<div class="t" style="left:308px;top:479.5px;font-size:12.9px">Cu<span class="u">t</span></div>
<div class="t" style="left:440px;width:157px;text-align:right;top:479.5px;font-size:12.9px">Ctrl+X</div>
<svg class="a" style="left:288px;top:481px" width="15" height="14"><circle cx="3" cy="3.5" r="2.3" fill="none" stroke="#aeb1b3" stroke-width="1.5"/><circle cx="3" cy="10.5" r="2.3" fill="none" stroke="#aeb1b3" stroke-width="1.5"/><path d="M5 5l9 7M5 9l9-7" stroke="#aeb1b3" stroke-width="1.6"/></svg>
<div class="t" style="left:308px;top:500.5px;font-size:12.9px"><span class="u">C</span>opy</div>
<div class="t" style="left:440px;width:157px;text-align:right;top:500.5px;font-size:12.9px">Ctrl+C</div>
<svg class="a" style="left:289px;top:502px" width="14" height="14"><path d="M1 11V1h9" stroke="#aeb1b3" stroke-width="1.6" fill="none"/><rect x="3.5" y="3.5" width="10" height="10" fill="#aeb1b3"/><path d="M6 6.5h5M6 9h5M6 11.5h5" stroke="#3c3f41" stroke-width="1"/></svg>
<div class="t" style="left:308px;top:521.5px;font-size:12.9px">Copy Path/Reference...</div>
<div class="t" style="left:308px;top:542.5px;font-size:12.9px"><span class="u">P</span>aste</div>
<div class="t" style="left:440px;width:157px;text-align:right;top:542.5px;font-size:12.9px">Ctrl+V</div>
<svg class="a" style="left:289px;top:544px" width="14" height="15"><rect x="1" y="2" width="11" height="12" fill="none" stroke="#aeb1b3" stroke-width="1.6"/><rect x="3.5" y="0" width="6" height="4" fill="#aeb1b3"/></svg>
<div class="a" style="left:284px;top:562px;width:325px;height:1px;background:#515151"></div>
<div class="t" style="left:308px;top:566.5px;font-size:12.9px">Find <span class="u">U</span>sages</div>
<div class="t" style="left:440px;width:157px;text-align:right;top:566.5px;font-size:12.9px">Alt+F7</div>
<div class="t" style="left:308px;top:587.5px;font-size:12.9px">Analy<span class="u">z</span>e</div>
<svg class="a" style="left:597px;top:591px" width="6" height="10"><path d="M0.5 0.5L5 5 0.5 9.5" stroke="#bbbbbb" stroke-width="1.2" fill="none"/></svg>
<div class="a" style="left:284px;top:607px;width:325px;height:1px;background:#515151"></div>
<div class="t" style="left:308px;top:611.5px;font-size:12.9px"><span class="u">R</span>efactor</div>
<svg class="a" style="left:597px;top:615px" width="6" height="10"><path d="M0.5 0.5L5 5 0.5 9.5" stroke="#bbbbbb" stroke-width="1.2" fill="none"/></svg>
<div class="a" style="left:284px;top:631px;width:325px;height:1px;background:#515151"></div>
<div class="t" style="left:308px;top:635.5px;font-size:12.9px">Add to F<span class="u">a</span>vorites</div>
<svg class="a" style="left:597px;top:639px" width="6" height="10"><path d="M0.5 0.5L5 5 0.5 9.5" stroke="#bbbbbb" stroke-width="1.2" fill="none"/></svg>
<div class="a" style="left:284px;top:655px;width:325px;height:1px;background:#515151"></div>
<div class="t" style="left:308px;top:659.5px;font-size:12.9px"><span class="u">D</span>elete...</div>
<div class="t" style="left:440px;width:157px;text-align:right;top:659.5px;font-size:12.9px">Delete</div>
<div class="t" style="left:308px;top:680.5px;font-size:12.9px">Override File Type</div>
<div class="a" style="left:284px;top:700px;width:325px;height:1px;background:#515151"></div>
<div class="t" style="left:308px;top:704.5px;font-size:12.9px">R<span class="u">u</span>n 'springboot-debug-tes...'</div>
<div class="t" style="left:440px;width:157px;text-align:right;top:704.5px;font-size:12.9px">Ctrl+Shift+F10</div>
<svg class="a" style="left:290px;top:706px" width="13" height="14"><path d="M1 1l11 6-11 6z" fill="#499c54"/></svg>
<div class="t" style="left:308px;top:725.5px;font-size:12.9px"><span class="u">D</span>ebug 'springboot-debug-tes...'</div>
<svg class="a" style="left:288px;top:726px" width="15" height="16"><ellipse cx="7.5" cy="9" rx="4.5" ry="5.5" fill="#499c54"/><path d="M4 3l2 2M11 3l-2 2M0 7h3M12 7h3M0 11h3M12 11h3" stroke="#499c54" stroke-width="1.5"/><path d="M5 8h5M5 11h5" stroke="#3c3f41" stroke-width="1.2"/></svg>
<div class="t" style="left:308px;top:746.5px;font-size:12.9px">More Run/Debug</div>
<svg class="a" style="left:597px;top:750px" width="6" height="10"><path d="M0.5 0.5L5 5 0.5 9.5" stroke="#bbbbbb" stroke-width="1.2" fill="none"/></svg>
<div class="a" style="left:284px;top:766px;width:325px;height:1px;background:#515151"></div>
<div class="t" style="left:308px;top:770.5px;font-size:12.9px">Open in Right Split</div>
<div class="t" style="left:440px;width:157px;text-align:right;top:770.5px;font-size:12.9px">Shift+Enter</div>
<svg class="a" style="left:289px;top:772px" width="14" height="14"><rect x="0.8" y="0.8" width="12.4" height="12.4" fill="none" stroke="#aeb1b3" stroke-width="1.4"/><path d="M7 1v12" stroke="#aeb1b3" stroke-width="1.4"/></svg>
<div class="t" style="left:308px;top:791.5px;font-size:12.9px">Open In</div>
<svg class="a" style="left:597px;top:795px" width="6" height="10"><path d="M0.5 0.5L5 5 0.5 9.5" stroke="#bbbbbb" stroke-width="1.2" fill="none"/></svg>
<div class="t" style="left:308px;top:815.5px;font-size:12.9px">Local <span class="u">H</span>istory</div>
<svg class="a" style="left:597px;top:819px" width="6" height="10"><path d="M0.5 0.5L5 5 0.5 9.5" stroke="#bbbbbb" stroke-width="1.2" fill="none"/></svg>
<div class="t" style="left:308px;top:836.5px;font-size:12.9px">Reload from Disk</div>
<svg class="a" style="left:288px;top:838px" width="15" height="15"><path d="M12.5 5.5A5.5 5.5 0 0 0 2.5 5M2.5 9.5a5.5 5.5 0 0 0 10 .5" stroke="#aeb1b3" stroke-width="1.7" fill="none"/><path d="M0.5 1.5v5h5zM14.5 13.5v-5h-5z" fill="#aeb1b3"/></svg>
<div class="a" style="left:284px;top:856px;width:325px;height:1px;background:#515151"></div>
<div class="t" style="left:308px;top:860.5px;font-size:12.9px">Compare With...</div>
<div class="t" style="left:440px;width:157px;text-align:right;top:860.5px;font-size:12.9px">Ctrl+D</div>
<svg class="a" style="left:288px;top:862px" width="15" height="15"><path d="M14 1L8 7M8 3v4h4" stroke="#3592c4" stroke-width="1.8" fill="none"/><path d="M1 14l6-6M7 12V8H3" stroke="#3592c4" stroke-width="1.8" fill="none"/></svg>
<div class="t" style="left:308px;top:881.5px;font-size:12.9px">Co<span class="u">m</span>pare File with Editor</div>
<div class="a" style="left:284px;top:901px;width:325px;height:1px;background:#515151"></div>
<div class="t" style="left:308px;top:905.5px;font-size:12.9px">Add as Library...</div>
<div class="a" style="left:606px;top:786px;width:192px;height:65px;background:#3c3f41;border:1px solid #515151"></div>
<div class="t" style="left:630px;top:789px;font-size:13.2px">Explorer</div>
<div class="t" style="left:630px;top:810px;font-size:13.2px">File <span class="u">P</span>ath</div>
<div class="t" style="left:700px;width:85px;text-align:right;top:810px;font-size:13.2px">Ctrl+Alt+F12</div>
<svg class="a" style="left:612px;top:833px" width="13" height="12"><rect x="0" y="0" width="13" height="12" fill="#9aa7b0"/><path d="M2 3l3 2.5L2 8M6 9h4" stroke="#3c3f41" stroke-width="1.2" fill="none"/></svg>
<div class="t" style="left:630px;top:831px;font-size:13.2px">Terminal</div>
<div class="a" style="left:785px;top:214px;width:810px;height:419px;background:#ffffff;box-shadow:0 0 6px 2px rgba(40,80,130,0.65)"></div>
<div class="a" style="left:785px;top:221px;width:810px;height:1px;background:#e5e5e5"></div>
<div class="a" style="left:785px;top:255px;width:810px;height:1px;background:#e0e0e0"></div>
<svg class="a" style="left:794px;top:231px" width="17" height="14" viewBox="0 0 16 13"><defs><linearGradient id="fg" x1="0" y1="0" x2="0" y2="1"><stop offset="0" stop-color="#ffe9a0"/><stop offset="1" stop-color="#f5c243"/></linearGradient></defs><path d="M0.5 1.5q0-1 1-1h4.5l1.5 1.5h7q1 0 1 1v1h-15z" fill="#f0b429"/><rect x="0.5" y="3" width="15" height="9.5" rx="1" fill="url(#fg)" stroke="#e3a91e" stroke-width="0.6"/></svg>
<svg class="a" style="left:819px;top:234px" width="5" height="8"><path d="M0.5 0.5L4 4 0.5 7.5" stroke="#555" stroke-width="1.2" fill="none"/></svg>
<div class="t" style="left:833px;top:230px;color:#1a1a1a;font-size:13.2px">此电脑</div>
<svg class="a" style="left:880px;top:234px" width="5" height="8"><path d="M0.5 0.5L4 4 0.5 7.5" stroke="#555" stroke-width="1.2" fill="none"/></svg>
<div class="t" style="left:893px;top:230px;color:#1a1a1a;font-size:13.2px">本地磁盘 (D:)</div>
<svg class="a" style="left:977px;top:234px" width="5" height="8"><path d="M0.5 0.5L4 4 0.5 7.5" stroke="#555" stroke-width="1.2" fill="none"/></svg>
<div class="t" style="left:991px;top:230px;color:#1a1a1a;font-size:13.2px">Work</div>
<svg class="a" style="left:1034px;top:234px" width="5" height="8"><path d="M0.5 0.5L4 4 0.5 7.5" stroke="#555" stroke-width="1.2" fill="none"/></svg>
<div class="t" style="left:1048px;top:230px;color:#1a1a1a;font-size:13.2px">springboot-debug-test</div>
<svg class="a" style="left:1193px;top:234px" width="5" height="8"><path d="M0.5 0.5L4 4 0.5 7.5" stroke="#555" stroke-width="1.2" fill="none"/></svg>
<div class="t" style="left:1207px;top:230px;color:#1a1a1a;font-size:13.2px">target</div>
<div class="a" style="left:788px;top:267px;width:16px;height:366px;background:#efefef"></div>
<div class="a" style="left:806px;top:267px;width:1px;height:366px;background:#f2f2f2"></div>
<div class="a" style="left:795px;top:383px;width:2px;height:250px;background:#8a8a8a"></div>
<div class="t" style="left:838px;top:272px;color:#4c607a;font-size:13px">名称</div>
<svg class="a" style="left:950px;top:265px" width="9" height="5"><path d="M0.5 4.5L4.5 0.5 8.5 4.5" stroke="#777" stroke-width="1" fill="none"/></svg>
<div class="a" style="left:1079px;top:267px;width:1px;height:27px;background:#e5e5e5"></div>
<div class="a" style="left:1223px;top:267px;width:1px;height:27px;background:#e5e5e5"></div>
<div class="a" style="left:1343px;top:267px;width:1px;height:27px;background:#e5e5e5"></div>
<div class="a" style="left:1423px;top:267px;width:1px;height:27px;background:#e5e5e5"></div>
<div class="t" style="left:1086px;top:272px;color:#4c607a;font-size:13px">修改日期</div>
<div class="t" style="left:1230px;top:272px;color:#4c607a;font-size:13px">类型</div>
<div class="t" style="left:1350px;top:272px;color:#4c607a;font-size:13px">大小</div>
<div class="a" style="left:822px;top:424px;width:598px;height:27px;background:#d9d9d9;border-radius:3px"></div>
<svg class="a" style="left:826px;top:306px" width="16" height="13" viewBox="0 0 16 13"><defs><linearGradient id="fg" x1="0" y1="0" x2="0" y2="1"><stop offset="0" stop-color="#ffe9a0"/><stop offset="1" stop-color="#f5c243"/></linearGradient></defs><path d="M0.5 1.5q0-1 1-1h4.5l1.5 1.5h7q1 0 1 1v1h-15z" fill="#f0b429"/><rect x="0.5" y="3" width="15" height="9.5" rx="1" fill="url(#fg)" stroke="#e3a91e" stroke-width="0.6"/></svg>
<div class="t" style="left:846px;top:306px;color:#1a1a1a;font-size:13.4px">classes</div>
<div class="t" style="left:1086px;top:306px;color:#5a5a5a;font-size:13.2px">2025/7/31 14:16</div>
<div class="t" style="left:1230px;top:306px;color:#5a5a5a;font-size:13.2px">文件夹</div>
<svg class="a" style="left:826px;top:337px" width="16" height="13" viewBox="0 0 16 13"><defs><linearGradient id="fg" x1="0" y1="0" x2="0" y2="1"><stop offset="0" stop-color="#ffe9a0"/><stop offset="1" stop-color="#f5c243"/></linearGradient></defs><path d="M0.5 1.5q0-1 1-1h4.5l1.5 1.5h7q1 0 1 1v1h-15z" fill="#f0b429"/><rect x="0.5" y="3" width="15" height="9.5" rx="1" fill="url(#fg)" stroke="#e3a91e" stroke-width="0.6"/></svg>
<div class="t" style="left:846px;top:337px;color:#1a1a1a;font-size:13.4px">generated-sources</div>
<div class="t" style="left:1086px;top:337px;color:#5a5a5a;font-size:13.2px">2025/7/31 14:16</div>
<div class="t" style="left:1230px;top:337px;color:#5a5a5a;font-size:13.2px">文件夹</div>
<svg class="a" style="left:826px;top:368px" width="16" height="13" viewBox="0 0 16 13"><defs><linearGradient id="fg" x1="0" y1="0" x2="0" y2="1"><stop offset="0" stop-color="#ffe9a0"/><stop offset="1" stop-color="#f5c243"/></linearGradient></defs><path d="M0.5 1.5q0-1 1-1h4.5l1.5 1.5h7q1 0 1 1v1h-15z" fill="#f0b429"/><rect x="0.5" y="3" width="15" height="9.5" rx="1" fill="url(#fg)" stroke="#e3a91e" stroke-width="0.6"/></svg>
<div class="t" style="left:846px;top:368px;color:#1a1a1a;font-size:13.4px">maven-archiver</div>
<div class="t" style="left:1086px;top:368px;color:#5a5a5a;font-size:13.2px">2025/7/31 14:16</div>
<div class="t" style="left:1230px;top:368px;color:#5a5a5a;font-size:13.2px">文件夹</div>
<svg class="a" style="left:826px;top:399px" width="16" height="13" viewBox="0 0 16 13"><defs><linearGradient id="fg" x1="0" y1="0" x2="0" y2="1"><stop offset="0" stop-color="#ffe9a0"/><stop offset="1" stop-color="#f5c243"/></linearGradient></defs><path d="M0.5 1.5q0-1 1-1h4.5l1.5 1.5h7q1 0 1 1v1h-15z" fill="#f0b429"/><rect x="0.5" y="3" width="15" height="9.5" rx="1" fill="url(#fg)" stroke="#e3a91e" stroke-width="0.6"/></svg>
<div class="t" style="left:846px;top:399px;color:#1a1a1a;font-size:13.4px">maven-status</div>
<div class="t" style="left:1086px;top:399px;color:#5a5a5a;font-size:13.2px">2025/7/31 14:16</div>
<div class="t" style="left:1230px;top:399px;color:#5a5a5a;font-size:13.2px">文件夹</div>
<svg class="a" style="left:826px;top:429px" width="16" height="16"><rect x="0.5" y="0.5" width="15" height="15" fill="#eef0f4" stroke="#5a6070"/><path d="M2 13l4-6 3 3 2-2 3 5z" fill="#4a5060"/><circle cx="8" cy="5" r="2" fill="#d33"/></svg>
<div class="t" style="left:846px;top:430px;color:#1a1a1a;font-size:13.4px">springboot-debug-test-1.0.0.jar</div>
<div class="t" style="left:1086px;top:430px;color:#5a5a5a;font-size:13.2px">2025/7/31 14:16</div>
<div class="t" style="left:1230px;top:430px;color:#5a5a5a;font-size:13.2px">JAR 文件</div>
<div class="t" style="left:1320px;width:96px;text-align:right;top:430px;color:#5a5a5a;font-size:13.2px">17,401 KB</div>
<svg class="a" style="left:828px;top:459px" width="13" height="17"><path d="M0.5 0.5h8l4 4v12h-12z" fill="#fff" stroke="#777"/><path d="M8.5 0.5v4h4" fill="none" stroke="#777"/></svg>
<div class="t" style="left:846px;top:461px;color:#1a1a1a;font-size:13.4px">springboot-debug-test-1.0.0.jar.origi...</div>
<div class="t" style="left:1086px;top:461px;color:#5a5a5a;font-size:13.2px">2025/7/31 14:16</div>
<div class="t" style="left:1230px;top:461px;color:#5a5a5a;font-size:13.2px">ORIGINAL 文件</div>
<div class="t" style="left:1320px;width:96px;text-align:right;top:461px;color:#5a5a5a;font-size:13.2px">8 KB</div>
<div class="a" style="left:75px;top:442px;width:187px;height:28px;border:3px solid #e81d25"></div>
<div class="a" style="left:279px;top:784px;width:129px;height:30px;border:3px solid #e81d25"></div>
<div class="a" style="left:614px;top:784px;width:84px;height:28px;border:3px solid #e81d25"></div>
<div class="a" style="left:815px;top:414px;width:612px;height:44px;border:3px solid #e81d25"></div>
<svg class="a" style="left:0;top:0" width="1696" height="988"><path d="M346.8 399.5 L275.2 428.8 L277.1 421.3 L259.5 440.5 L285.5 439.5 L278.6 436.1 L347.2 400.5Z" fill="#e81d25"/><path d="M253.9 838.3 L278.4 819.8 L277.9 826.0 L289.0 805.0 L266.4 812.2 L272.6 812.9 L250.1 833.7Z" fill="#e81d25"/><path d="M905.6 813.0 L764.2 793.9 L769.7 788.5 L744.7 795.8 L767.5 808.4 L763.3 801.9 L905.4 814.0Z" fill="#e81d25"/><path d="M1008.1 527.0 L1013.8 476.0 L1019.8 480.2 L1010.7 459.8 L999.8 479.3 L1006.2 475.6 L1007.1 527.0Z" fill="#e81d25"/></svg>
<div class="a" style="left:92px;top:826px;width:193px;height:26px;background:#fff;border-radius:3px"></div>
<svg class="a" style="left:82px;top:821px" width="34" height="32"><rect x="3" y="3" width="28" height="26" rx="5" fill="#f05a24" transform="rotate(-10 17 16)"/><path d="M23 10q-4-3-9-1t-1 5 6 4-3 5-8-1" stroke="#fff" stroke-width="3.6" fill="none" stroke-linecap="round"/></svg>
<div class="t" style="left:120px;top:830px;color:#1565d8;font-size:15px;font-weight:bold;line-height:18px">中</div>
<svg class="a" style="left:146px;top:831px" width="14" height="14"><circle cx="3" cy="5" r="2" fill="none" stroke="#1565d8" stroke-width="1.5"/><path d="M10 7q2 0 1 3t-2 3" stroke="#1565d8" stroke-width="2.2" fill="none"/></svg>
<svg class="a" style="left:170px;top:829px" width="12" height="18"><rect x="3" y="0" width="6" height="11" rx="3" fill="#1565d8"/><path d="M1 8q0 5 5 5t5-5M6 13v3M3 17h6" stroke="#1565d8" stroke-width="1.6" fill="none"/></svg>
<svg class="a" style="left:193px;top:831px" width="15" height="12"><rect x="0.8" y="0.8" width="13.4" height="10.4" rx="1.5" fill="none" stroke="#1565d8" stroke-width="1.6"/><path d="M3 4h1.5M6.5 4h2M10.5 4h1.5M3 6.5h1.5M6.5 6.5h2M10.5 6.5h1.5M4 9h7" stroke="#1565d8" stroke-width="1.3"/></svg>
<svg class="a" style="left:216px;top:826px" width="18" height="20"><path d="M1 7l5-3h6l5 3-2 4h-2v8h-8v-8h-2z" fill="#9a6bf0"/><path d="M1 7l5-3h4v15h-4v-8h-2z" fill="#e8647a"/><circle cx="14" cy="3.5" r="3" fill="#f0483e"/></svg>
<svg class="a" style="left:242px;top:832px" width="13" height="13"><rect x="0" y="0" width="5.5" height="5.5" rx="1" fill="#1565d8"/><rect x="7.5" y="0" width="5.5" height="5.5" rx="1" fill="#fff" stroke="#1565d8" stroke-width="1.4"/><rect x="0" y="7.5" width="5.5" height="5.5" rx="1" fill="#1565d8"/><rect x="7.5" y="7.5" width="5.5" height="5.5" rx="1" fill="#1565d8"/></svg>
<svg class="a" style="left:262px;top:827px" width="22" height="22"><circle cx="10" cy="12" r="9" fill="#fbf3f0" stroke="#f3d9d0"/><path d="M4 11q6-4 12-1l-1 3q-5-2-10 1z" fill="#e8602c"/><circle cx="8" cy="14" r="1" fill="#333"/><path d="M18 2l1 2 2 1-2 1-1 2-1-2-2-1 2-1z" fill="#f5d142"/></svg>
<div class="t" style="left:292px;top:371px;color:#e8262a;font-size:18px;line-height:20px">1.点击jar文件右键</div>
<div class="t" style="left:139px;top:861px;color:#e8262a;font-size:18px;line-height:20px">2.选择open in</div>
<div class="t" style="left:922px;top:803px;color:#e8262a;font-size:18px;line-height:20px">3.选择文件夹</div>
<div class="t" style="left:947px;top:527px;color:#e8262a;font-size:18px;line-height:20px">4.选择jar文件</div>
<svg class="a" style="left:1686px;top:918px" width="10" height="30"><rect x="0" y="3" width="20" height="24" rx="4" fill="#f05a24" transform="rotate(-10 10 15)"/><ellipse cx="9" cy="12" rx="4" ry="3" fill="#fff"/></svg>
</body></html>
